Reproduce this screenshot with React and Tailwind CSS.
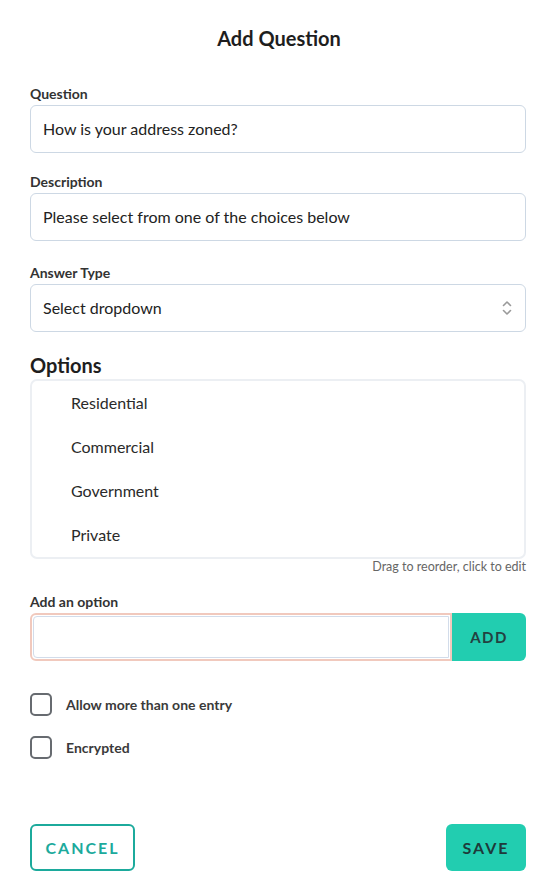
import React, { useState } from 'react';

const Field = ({ label, value, className = '' }) => (
  <div className={className}>
    <label className="block text-[14px] leading-[18px] font-bold text-[#333]">{label}</label>
    <div className="mt-[2px] h-[48px] w-full rounded-[6px] border border-[#cdd8e4] bg-white px-[12px] flex items-center text-[16px] text-[#222]">
      {value}
    </div>
  </div>
);

const Checkbox = ({ label, className = '' }) => {
  const [checked, setChecked] = useState(false);
  return (
    <label className={`flex items-center gap-[14px] cursor-pointer ${className}`} onClick={() => setChecked(!checked)}>
      <span className="h-[23px] w-[22px] rounded-[5px] border-2 border-[#676b70] bg-white" />
      <span className="text-[14px] font-bold text-[#3a3a3a]">{label}</span>
    </label>
  );
};

export default function App() {
  const options = ['Residential', 'Commercial', 'Government', 'Private'];
  return (
    <div className="min-h-[894px] w-[558px] bg-white pl-[30px] pr-[32px] font-['Lato','Liberation_Sans',sans-serif] text-[#222]">
      <h2 className="pt-[24px] text-center text-[20px] leading-[28px] font-bold text-[#1e1e1e] pl-[2px]">Add Question</h2>

      <Field label="Question" value="How is your address zoned?" className="mt-[33px]" />
      <Field label="Description" value="Please select from one of the choices below" className="mt-[20px]" />

      {/* Answer type select */}
      <div className="mt-[23px]">
        <label className="block text-[14px] leading-[18px] font-bold text-[#333]">Answer Type</label>
        <div className="mt-[2px] h-[48px] w-full rounded-[6px] border border-[#cdd8e4] bg-white pl-[12px] pr-[12px] flex items-center justify-between text-[16px] text-[#222]">
          <span>Select dropdown</span>
          <svg width="12" height="18" viewBox="0 0 12 18" fill="none" stroke="#9a9a9a" strokeWidth="1.6" strokeLinecap="round" strokeLinejoin="round">
            <path d="M2.5 6.5L6 3l3.5 3.5" />
            <path d="M2.5 11.5L6 15l3.5-3.5" />
          </svg>
        </div>
      </div>

      <h3 className="mt-[19px] text-[20px] leading-[28px] font-bold text-[#1e1e1e]">Options</h3>
      <div className="h-[180px] rounded-[7px] border-2 border-[#eceff3] bg-white pt-[12px]">
        {options.map((o) => (
          <div key={o} className="h-[44px] pl-[39px] text-[16px] leading-[20px] text-[#2a2a2a]">
            {o}
          </div>
        ))}
      </div>
      <p className="text-right text-[12.5px] leading-[16px] text-[#666]">Drag to reorder, click to edit</p>

      <div className="mt-[18px]">
        <label className="block text-[14px] leading-[18px] font-bold text-[#333]">Add an option</label>
        <div className="mt-[2px] flex h-[48px]">
          <div className="flex-1 rounded-l-[6px] border-2 border-[#f1c9bd] p-px">
            <input className="h-full w-full rounded-l-[4px] border border-[#d2dcea] bg-white outline-none px-[10px] text-[16px]" />
          </div>
          <button className="w-[74px] rounded-r-[6px] bg-[#22cdb0] text-[15px] font-bold tracking-[1.5px] text-[#234141]">ADD</button>
        </div>
      </div>

      <Checkbox label="Allow more than one entry" className="mt-[32px]" />
      <Checkbox label="Encrypted" className="mt-[20px]" />

      <div className="mt-[65px] flex justify-between">
        <button className="h-[47px] w-[105px] rounded-[6px] border-2 border-[#1caa9c] text-[16px] font-bold tracking-[2px] text-[#1caa9c]">CANCEL</button>
        <button className="h-[47px] w-[80px] rounded-[6px] bg-[#22cdb0] text-[16px] font-bold tracking-[2px] text-[#1e3a3a]">SAVE</button>
      </div>
    </div>
  );
}
